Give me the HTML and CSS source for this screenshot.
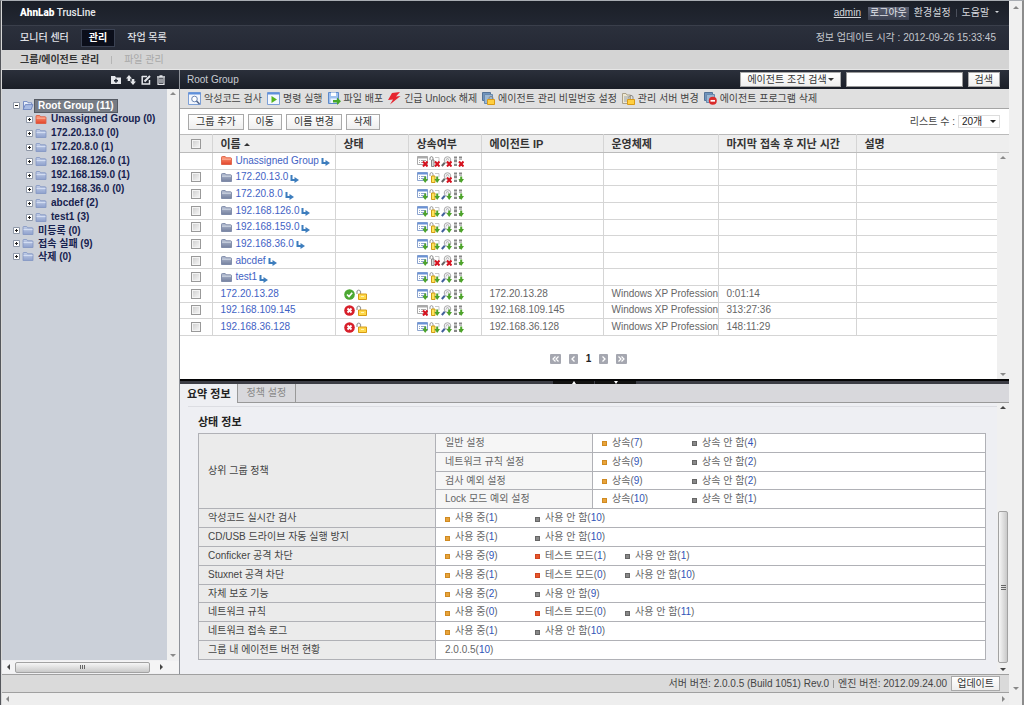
FILE: index.html
```html
<!DOCTYPE html>
<html lang="ko">
<head>
<meta charset="utf-8">
<title>AhnLab TrusLine</title>
<link rel="stylesheet" href="styles.css">
</head>
<body>
<svg class="defs" aria-hidden="true">
  <defs>
    <linearGradient id="gBlue" x1="0" y1="0" x2="0" y2="1"><stop offset="0" stop-color="#c3cfe8"/><stop offset="1" stop-color="#8fa1cd"/></linearGradient>
    <linearGradient id="gSlate" x1="0" y1="0" x2="0" y2="1"><stop offset="0" stop-color="#b4bdd2"/><stop offset="1" stop-color="#75819f"/></linearGradient>
    <linearGradient id="gRed" x1="0" y1="0" x2="0" y2="1"><stop offset="0" stop-color="#ff9a78"/><stop offset="1" stop-color="#e2452c"/></linearGradient>
  </defs>
  <symbol id="folder" viewBox="0 0 12 10"><path d="M.5 9.5V1.5Q.5.5 1.500.5H4.500L5.500 2H10.500Q11.500 2 11.500 3V9.500Z" fill="url(#gBlue)" stroke="#8597c4"/><path d="M1 4H11" stroke="#dbe4f6"/></symbol>
  <symbol id="folder-slate" viewBox="0 0 12 10"><path d="M.5 9.5V1.5Q.5.5 1.5.5H4.5L5.5 2H10.5Q11.5 2 11.5 3V9.5Z" fill="url(#gSlate)" stroke="#7783a3"/><path d="M1 3.500H11" stroke="#dfe4ee"/></symbol>
  <symbol id="folder-red" viewBox="0 0 12 10"><path d="M.5 9.5V1.5Q.5.5 1.5.5H4.5L5.5 2H10.5Q11.5 2 11.5 3V9.5Z" fill="url(#gRed)" stroke="#dc5a40"/><path d="M1 3.500H11" stroke="#ffc3ac"/></symbol>
  <symbol id="folder-open" viewBox="0 0 12 10"><path d="M1 9.500V.5H5L6 2H10V4" fill="#e6edfa" stroke="#6d85bf"/><path d="M.6 9.500 3 4H11.500L9.500 9.500Z" fill="#a9bce4" stroke="#6d85bf"/></symbol>
  <symbol id="minus" viewBox="0 0 7 7"><path d="M.5.5H6.500V6.500H.5Z" fill="#fff" stroke="#8f98a8"/><path d="M2 3.500H5" stroke="#222"/></symbol>
  <symbol id="plus" viewBox="0 0 7 7"><path d="M.5.5H6.500V6.500H.5Z" fill="#fff" stroke="#8f98a8"/><path d="M2 3.500H5M3.500 2V5" stroke="#222"/></symbol>
  <symbol id="inherit" viewBox="0 0 9 8"><path d="M1.500 0V5H5" fill="none" stroke="#3c7dbd" stroke-width="2"/><path d="M4.500 2 9 5 4.500 8Z" fill="#3c7dbd"/></symbol>
  <symbol id="x" viewBox="0 0 11 11"><path d="M6 5.500 10.500 10.500M10.500 5.500 6 10.500" stroke="#d6121f" stroke-width="2"/></symbol>
  <symbol id="dn" viewBox="0 0 11 11"><path d="M7.200 4.500H9.200V7H11L8.200 11 5.400 7H7.200Z" fill="#4da32a"/></symbol>
  <symbol id="list" viewBox="0 0 11 11"><path d="M.5.5H10.500V8.500H.5Z" fill="#fff" stroke="#8ba3ce"/><path d="M.5 1.500H10.500" stroke="#6a92d5" stroke-width="2"/><path d="M2 4.500H3M4 4.500H9M2 6.500H3M4 6.500H8" stroke="#8fa6cb"/></symbol>
  <symbol id="list-off" viewBox="0 0 11 11"><path d="M.5.5H10.500V8.500H.5Z" fill="#fff" stroke="#aaa"/><path d="M.5 1.500H10.500" stroke="#aaa" stroke-width="2"/><path d="M2 4.500H3M4 4.500H9M2 6.500H3M4 6.500H8" stroke="#aaa"/></symbol>
  <symbol id="key" viewBox="0 0 11 11"><path d="M1 4V1.500Q2.500-.3 4 1.500V4" fill="none" stroke="#999"/><path d="M2.500 4H6V10.500H2.500Z" fill="#ffe55c" stroke="#cf9d16"/><path d="M6 1.500H10V5" fill="none" stroke="#c9c9c9"/></symbol>
  <symbol id="key-off" viewBox="0 0 11 11"><path d="M1 4V1.500Q2.500-.3 4 1.500V4" fill="none" stroke="#888"/><path d="M2.500 4H5V10.500H2.500Z" fill="#ddd" stroke="#888"/><path d="M6 1.500H10V5" fill="none" stroke="#c9c9c9"/></symbol>
  <symbol id="lens" viewBox="0 0 11 11"><circle cx="6.500" cy="4" r="3.300" fill="#f4f4f8" stroke="#aaa"/><path d="M5 4.500 6.500 2 8 4.500" fill="none" stroke="#bbb"/><path d="M3.800 6.800.8 10" stroke="#415f9b" stroke-width="2"/></symbol>
  <symbol id="lens-off" viewBox="0 0 11 11"><circle cx="6.500" cy="4" r="3.300" fill="#f4f4f4" stroke="#aaa"/><path d="M5 4.500 6.500 2 8 4.500" fill="none" stroke="#bbb"/><path d="M3.800 6.800.8 10" stroke="#666" stroke-width="2"/></symbol>
  <symbol id="net" viewBox="0 0 11 11"><path d="M1 1.500H4M6 1.500H9M1 5H4M1 9H4M6 9H9" stroke="#888" stroke-width="2"/><path d="M1 3.500H4M6 3.500H9M1 7H4" stroke="#bbb"/></symbol>
  <symbol id="list-x" viewBox="0 0 11 11"><use href="#list-off"/><use href="#x"/></symbol>
  <symbol id="list-d" viewBox="0 0 11 11"><use href="#list"/><use href="#dn"/></symbol>
  <symbol id="key-x" viewBox="0 0 11 11"><use href="#key-off"/><use href="#x"/></symbol>
  <symbol id="key-d" viewBox="0 0 11 11"><use href="#key"/><use href="#dn"/></symbol>
  <symbol id="lens-x" viewBox="0 0 11 11"><use href="#lens-off"/><use href="#x"/></symbol>
  <symbol id="lens-d" viewBox="0 0 11 11"><use href="#lens"/><use href="#dn"/></symbol>
  <symbol id="net-x" viewBox="0 0 11 11"><use href="#net"/><use href="#x"/></symbol>
  <symbol id="net-d" viewBox="0 0 11 11"><use href="#net"/><use href="#dn"/></symbol>
  <symbol id="ok" viewBox="0 0 11 11"><circle cx="5.500" cy="5.500" r="5.300" fill="#4ca832"/><path d="M3 5.500 5 7.500 8.200 3.800" fill="none" stroke="#fff" stroke-width="1.700"/></symbol>
  <symbol id="bad" viewBox="0 0 11 11"><circle cx="5.500" cy="5.500" r="5.300" fill="#d71f2a"/><path d="M3.500 3.500 7.500 7.500M7.500 3.500 3.500 7.500" stroke="#fff" stroke-width="1.900"/></symbol>
  <symbol id="unlock" viewBox="0 0 11 11"><path d="M1 5V2.500Q2.700-.5 4.500 2.500V5" fill="none" stroke="#999" stroke-width="1.200"/><path d="M2.500 5H10.500V10.500H2.500Z" fill="#ffd94a" stroke="#d79c14"/><path d="M5 7.500H8" stroke="#fff3b5"/></symbol>
  <symbol id="t-scan" viewBox="0 0 13 13"><path d="M.5.5H12.500V12.500H.5Z" fill="#f2f6fd" stroke="#7c9fd6"/><path d="M.5 1.500H12.500" stroke="#5d8fdb" stroke-width="2"/><circle cx="6.500" cy="7" r="2.800" fill="#fff" stroke="#6d87b4"/><path d="M8.500 9 11.500 12" stroke="#54678c" stroke-width="1.600"/></symbol>
  <symbol id="t-run" viewBox="0 0 13 13"><path d="M.5.5H12.500V12.500H.5Z" fill="#f2f8ff" stroke="#7c9fd6"/><path d="M.5 1.500H12.500" stroke="#5d8fdb" stroke-width="2"/><path d="M4.500 4 10 7.500 4.500 11Z" fill="#55b51f"/></symbol>
  <symbol id="t-dist" viewBox="0 0 13 13"><path d="M.5.5H10.500V11.500H.5Z" fill="#9fc1ef" stroke="#5e8aca"/><path d="M3 .5H8V4H3Z" fill="#fff"/><path d="M2.500 6.500H8.500V11H2.500Z" fill="#eef5ff"/><path d="M5 8H9V5.500L13 9.200 9 13V10.500H5Z" fill="#46a829"/></symbol>
  <symbol id="t-bolt" viewBox="0 0 13 13"><path d="M4 1 12 0 8 4.500 12.500 4 2 12.500 5 7.500 0 8Z" fill="#e6252f"/></symbol>
  <symbol id="t-pass" viewBox="0 0 13 13"><path d="M.5.5H8.500V8.500H.5Z" fill="#6f93bd" stroke="#537296"/><path d="M2.500 2.500H10.500V11.500H2.500Z" fill="#9ab6d2" stroke="#688aae"/><path d="M7 7V5.500Q9 3 11 5.500V7" fill="none" stroke="#888"/><path d="M5.500 7.500H12.500V12.500H5.500Z" fill="#ffcf40" stroke="#d99a17"/></symbol>
  <symbol id="t-server" viewBox="0 0 13 13"><path d="M.5 1.500H4L5 3H8.500V11.500H.5Z" fill="#eee8d2" stroke="#aaa18a"/><path d="M2 5H7M2 7H6M2 9H5" stroke="#9aa2ad"/><path d="M7 7V4.500Q9 2 11 4.500V7" fill="none" stroke="#888"/><path d="M5.500 7.500H12.500V12.500H5.500Z" fill="#ffcf40" stroke="#d99a17"/></symbol>
  <symbol id="t-del" viewBox="0 0 13 13"><path d="M.5.5H8.500V8.500H.5Z" fill="#6f93bd" stroke="#537296"/><path d="M2.500 2.500H10.500V10.500H2.500Z" fill="#9ab6d2" stroke="#688aae"/><circle cx="8.800" cy="8.800" r="4" fill="#d92b2b"/><path d="M6.500 8.800H11" stroke="#fff" stroke-width="1.700"/></symbol>
  <symbol id="h-add" viewBox="0 0 10 10"><path d="M0 1H4L5 2.500H10V9H0Z" fill="#e4e6ea"/><path d="M5 3.800V7.800M3 5.800H7" stroke="#222835" stroke-width="1.400"/></symbol>
  <symbol id="h-move" viewBox="0 0 10 10"><path d="M3 0 6 3.500H4.300V6H1.700V3.500H0ZM7 10 4 6.500H5.700V4H8.300V6.500H10Z" fill="#e4e6ea"/></symbol>
  <symbol id="h-edit" viewBox="0 0 10 10"><path d="M1 1.500H6M1.200 1V9H8.500V5" fill="none" stroke="#e4e6ea" stroke-width="1.500"/><path d="M3.500 6.500 9 1" stroke="#e4e6ea" stroke-width="2"/></symbol>
  <symbol id="h-trash" viewBox="0 0 10 10"><path d="M1 2H9M3.500 1H6.500" stroke="#e4e6ea" stroke-width="1.300"/><path d="M2 3V9.300H8V3M4 3.500V8M6 3.500V8" fill="none" stroke="#e4e6ea" stroke-width="1.200"/></symbol>
  <symbol id="first" viewBox="0 0 11 10"><path d="M5.500 2.500 3 5 5.500 7.500M8.500 2.500 6 5 8.500 7.500" fill="none" stroke="#fff" stroke-width="1.200"/></symbol>
  <symbol id="prev" viewBox="0 0 9 10"><path d="M5.500 2.500 3 5 5.500 7.500" fill="none" stroke="#fff" stroke-width="1.300"/></symbol>
  <symbol id="next" viewBox="0 0 9 10"><path d="M3.500 2.500 6 5 3.500 7.500" fill="none" stroke="#fff" stroke-width="1.300"/></symbol>
  <symbol id="last" viewBox="0 0 11 10"><path d="M2.500 2.500 5 5 2.500 7.500M5.500 2.500 8 5 5.500 7.500" fill="none" stroke="#fff" stroke-width="1.200"/></symbol>
</svg>

<div class="window">
  <div class="app">
    <header class="top">
      <div class="brand"><b>AhnLab</b> TrusLine</div>
      <div class="account">
        <a class="user" href="#">admin</a>
        <button class="logout" type="button">로그아웃</button>
        <a href="#">환경설정</a><span class="bar"></span>
        <a href="#">도움말 <i class="tri down"></i></a>
      </div>
    </header>
    <nav class="nav">
      <a href="#">모니터 센터</a>
      <a class="current" href="#">관리</a>
      <a href="#">작업 목록</a>
      <span class="updated">정보 업데이트 시각 : 2012-09-26 15:33:45</span>
    </nav>
    <nav class="subnav">
      <a class="current" href="#">그룹/에이전트 관리</a><span class="bar"></span><a href="#">파일 관리</a>
    </nav>

    <div class="body">
      <aside class="side">
        <div class="side-head">
          <button type="button" aria-label="그룹 추가"><svg><use href="#h-add"/></svg></button>
          <button type="button" aria-label="이동"><svg><use href="#h-move"/></svg></button>
          <button type="button" aria-label="이름 변경"><svg><use href="#h-edit"/></svg></button>
          <button type="button" aria-label="삭제"><svg><use href="#h-trash"/></svg></button>
        </div>
        <div class="side-body">
          <ul class="tree">
            <li><svg class="tg"><use href="#minus"/></svg><svg class="fd"><use href="#folder-open"/></svg><a class="selected" href="#">Root Group (11)</a>
              <ul>
                <li><svg class="tg"><use href="#plus"/></svg><svg class="fd"><use href="#folder-red"/></svg><a href="#">Unassigned Group (0)</a></li>
                <li><svg class="tg"><use href="#plus"/></svg><svg class="fd"><use href="#folder"/></svg><a href="#">172.20.13.0 (0)</a></li>
                <li><svg class="tg"><use href="#plus"/></svg><svg class="fd"><use href="#folder"/></svg><a href="#">172.20.8.0 (1)</a></li>
                <li><svg class="tg"><use href="#plus"/></svg><svg class="fd"><use href="#folder"/></svg><a href="#">192.168.126.0 (1)</a></li>
                <li><svg class="tg"><use href="#plus"/></svg><svg class="fd"><use href="#folder"/></svg><a href="#">192.168.159.0 (1)</a></li>
                <li><svg class="tg"><use href="#plus"/></svg><svg class="fd"><use href="#folder"/></svg><a href="#">192.168.36.0 (0)</a></li>
                <li><svg class="tg"><use href="#plus"/></svg><svg class="fd"><use href="#folder"/></svg><a href="#">abcdef (2)</a></li>
                <li><svg class="tg"><use href="#plus"/></svg><svg class="fd"><use href="#folder"/></svg><a href="#">test1 (3)</a></li>
              </ul>
            </li>
            <li><svg class="tg"><use href="#plus"/></svg><svg class="fd"><use href="#folder"/></svg><a href="#">미등록 (0)</a></li>
            <li><svg class="tg"><use href="#plus"/></svg><svg class="fd"><use href="#folder"/></svg><a href="#">접속 실패 (9)</a></li>
            <li><svg class="tg"><use href="#plus"/></svg><svg class="fd"><use href="#folder"/></svg><a href="#">삭제 (0)</a></li>
          </ul>
          <div class="vscroll"><i class="tri up"></i><i class="tri down"></i></div>
        </div>
        <div class="hscroll"><i class="tri left"></i><div class="thumb"><i></i><i></i><i></i></div><i class="tri right"></i></div>
      </aside>

      <main class="main">
        <div class="main-head">
          <h1>Root Group</h1>
          <form class="search">
            <button class="btn" type="button">에이전트 조건 검색<i class="tri down"></i></button>
            <input type="text" aria-label="검색어">
            <button class="btn" type="button">검색</button>
          </form>
        </div>
        <div class="toolbar">
          <button type="button"><svg><use href="#t-scan"/></svg>악성코드 검사</button>
          <button type="button"><svg><use href="#t-run"/></svg>명령 실행</button>
          <button type="button"><svg><use href="#t-dist"/></svg>파일 배포</button>
          <button type="button"><svg><use href="#t-bolt"/></svg>긴급 Unlock 해제</button>
          <button type="button"><svg><use href="#t-pass"/></svg>에이전트 관리 비밀번호 설정</button>
          <button type="button"><svg><use href="#t-server"/></svg>관리 서버 변경</button>
          <button type="button"><svg><use href="#t-del"/></svg>에이전트 프로그램 삭제</button>
        </div>
        <div class="actions">
          <button class="btn" type="button">그룹 추가</button>
          <button class="btn" type="button">이동</button>
          <button class="btn" type="button">이름 변경</button>
          <button class="btn" type="button">삭제</button>
          <label class="count">리스트 수 :
            <span class="select"><select><option>20개</option></select><i class="tri down"></i></span>
          </label>
        </div>

        <section class="list">
          <div class="list-main">
            <table class="grid">
              <colgroup><col class="c-check"><col class="c-name"><col class="c-state"><col class="c-inherit"><col class="c-ip"><col class="c-os"><col class="c-time"><col></colgroup>
              <thead>
                <tr><th><input type="checkbox" aria-label="전체 선택"></th><th>이름 <i class="tri up"></i></th><th>상태</th><th>상속여부</th><th>에이전트 IP</th><th>운영체제</th><th>마지막 접속 후 지난 시간</th><th>설명</th></tr>
              </thead>
              <tbody>
                <tr><td></td><td><a href="#"><svg class="fd"><use href="#folder-red"/></svg>Unassigned Group<svg class="in"><use href="#inherit"/></svg></a></td><td></td><td class="ic"><svg><use href="#list-x"/></svg><svg><use href="#key-x"/></svg><svg><use href="#lens-x"/></svg><svg><use href="#net-x"/></svg></td><td></td><td></td><td></td><td></td></tr>
                <tr><td><input type="checkbox" aria-label="172.20.13.0"></td><td><a href="#"><svg class="fd"><use href="#folder-slate"/></svg>172.20.13.0<svg class="in"><use href="#inherit"/></svg></a></td><td></td><td class="ic"><svg><use href="#list-d"/></svg><svg><use href="#key-d"/></svg><svg><use href="#lens-x"/></svg><svg><use href="#net-d"/></svg></td><td></td><td></td><td></td><td></td></tr>
                <tr><td><input type="checkbox" aria-label="172.20.8.0"></td><td><a href="#"><svg class="fd"><use href="#folder-slate"/></svg>172.20.8.0<svg class="in"><use href="#inherit"/></svg></a></td><td></td><td class="ic"><svg><use href="#list-d"/></svg><svg><use href="#key-d"/></svg><svg><use href="#lens-d"/></svg><svg><use href="#net-d"/></svg></td><td></td><td></td><td></td><td></td></tr>
                <tr><td><input type="checkbox" aria-label="192.168.126.0"></td><td><a href="#"><svg class="fd"><use href="#folder-slate"/></svg>192.168.126.0<svg class="in"><use href="#inherit"/></svg></a></td><td></td><td class="ic"><svg><use href="#list-d"/></svg><svg><use href="#key-d"/></svg><svg><use href="#lens-d"/></svg><svg><use href="#net-d"/></svg></td><td></td><td></td><td></td><td></td></tr>
                <tr><td><input type="checkbox" aria-label="192.168.159.0"></td><td><a href="#"><svg class="fd"><use href="#folder-slate"/></svg>192.168.159.0<svg class="in"><use href="#inherit"/></svg></a></td><td></td><td class="ic"><svg><use href="#list-d"/></svg><svg><use href="#key-d"/></svg><svg><use href="#lens-d"/></svg><svg><use href="#net-d"/></svg></td><td></td><td></td><td></td><td></td></tr>
                <tr><td><input type="checkbox" aria-label="192.168.36.0"></td><td><a href="#"><svg class="fd"><use href="#folder-slate"/></svg>192.168.36.0<svg class="in"><use href="#inherit"/></svg></a></td><td></td><td class="ic"><svg><use href="#list-d"/></svg><svg><use href="#key-d"/></svg><svg><use href="#lens-d"/></svg><svg><use href="#net-d"/></svg></td><td></td><td></td><td></td><td></td></tr>
                <tr><td><input type="checkbox" aria-label="abcdef"></td><td><a href="#"><svg class="fd"><use href="#folder-slate"/></svg>abcdef<svg class="in"><use href="#inherit"/></svg></a></td><td></td><td class="ic"><svg><use href="#list-d"/></svg><svg><use href="#key-x"/></svg><svg><use href="#lens-x"/></svg><svg><use href="#net-d"/></svg></td><td></td><td></td><td></td><td></td></tr>
                <tr><td><input type="checkbox" aria-label="test1"></td><td><a href="#"><svg class="fd"><use href="#folder-slate"/></svg>test1<svg class="in"><use href="#inherit"/></svg></a></td><td></td><td class="ic"><svg><use href="#list-d"/></svg><svg><use href="#key-d"/></svg><svg><use href="#lens-d"/></svg><svg><use href="#net-d"/></svg></td><td></td><td></td><td></td><td></td></tr>
                <tr><td><input type="checkbox" aria-label="172.20.13.28"></td><td><a href="#">172.20.13.28</a></td><td class="ic"><svg><use href="#ok"/></svg><svg><use href="#unlock"/></svg></td><td class="ic"><svg><use href="#list-d"/></svg><svg><use href="#key-d"/></svg><svg><use href="#lens-d"/></svg><svg><use href="#net-d"/></svg></td><td>172.20.13.28</td><td>Windows XP Profession</td><td>0:01:14</td><td></td></tr>
                <tr><td><input type="checkbox" aria-label="192.168.109.145"></td><td><a href="#">192.168.109.145</a></td><td class="ic"><svg><use href="#bad"/></svg><svg><use href="#unlock"/></svg></td><td class="ic"><svg><use href="#list-x"/></svg><svg><use href="#key-d"/></svg><svg><use href="#lens-d"/></svg><svg><use href="#net-d"/></svg></td><td>192.168.109.145</td><td>Windows XP Profession</td><td>313:27:36</td><td></td></tr>
                <tr><td><input type="checkbox" aria-label="192.168.36.128"></td><td><a href="#">192.168.36.128</a></td><td class="ic"><svg><use href="#bad"/></svg><svg><use href="#unlock"/></svg></td><td class="ic"><svg><use href="#list-d"/></svg><svg><use href="#key-d"/></svg><svg><use href="#lens-d"/></svg><svg><use href="#net-d"/></svg></td><td>192.168.36.128</td><td>Windows XP Profession</td><td>148:11:29</td><td></td></tr>
              </tbody>
            </table>
            <div class="pager">
              <button type="button" aria-label="처음"><svg class="wide"><use href="#first"/></svg></button>
              <button type="button" aria-label="이전"><svg><use href="#prev"/></svg></button>
              <b>1</b>
              <button type="button" aria-label="다음"><svg><use href="#next"/></svg></button>
              <button type="button" aria-label="마지막"><svg class="wide"><use href="#last"/></svg></button>
            </div>
          </div>
          <div class="list-side"><div class="cap"></div><div class="vscroll"><i class="tri up"></i><i class="tri down"></i></div></div>
        </section>

        <div class="splitter"><span><i class="tri up"></i></span><span><i class="tri down"></i></span></div>

        <div class="tabs"><button class="current" type="button">요약 정보</button><button type="button">정책 설정</button></div>
        <section class="detail">
          <div class="detail-main">
            <h2>상태 정보</h2>
            <table class="info">
              <colgroup><col class="d-label"><col class="d-sub"><col></colgroup>
              <tbody>
                <tr><th rowspan="4">상위 그룹 정책</th><th class="sub">일반 설정</th><td><div><span class="on">상속(<a href="#">7</a>)</span><span class="off">상속 안 함(<a href="#">4</a>)</span></div></td></tr>
                <tr><th class="sub">네트워크 규칙 설정</th><td><div><span class="on">상속(<a href="#">9</a>)</span><span class="off">상속 안 함(<a href="#">2</a>)</span></div></td></tr>
                <tr><th class="sub">검사 예외 설정</th><td><div><span class="on">상속(<a href="#">9</a>)</span><span class="off">상속 안 함(<a href="#">2</a>)</span></div></td></tr>
                <tr><th class="sub">Lock 모드 예외 설정</th><td><div><span class="on">상속(<a href="#">10</a>)</span><span class="off">상속 안 함(<a href="#">1</a>)</span></div></td></tr>
                <tr><th>악성코드 실시간 검사</th><td colspan="2"><div><span class="on">사용 중(<a href="#">1</a>)</span><span class="off">사용 안 함(<a href="#">10</a>)</span></div></td></tr>
                <tr><th>CD/USB 드라이브 자동 실행 방지</th><td colspan="2"><div><span class="on">사용 중(<a href="#">1</a>)</span><span class="off">사용 안 함(<a href="#">10</a>)</span></div></td></tr>
                <tr><th>Conficker 공격 차단</th><td colspan="2"><div><span class="on">사용 중(<a href="#">9</a>)</span><span class="test">테스트 모드(<a href="#">1</a>)</span><span class="off">사용 안 함(<a href="#">1</a>)</span></div></td></tr>
                <tr><th>Stuxnet 공격 차단</th><td colspan="2"><div><span class="on">사용 중(<a href="#">1</a>)</span><span class="test">테스트 모드(<a href="#">0</a>)</span><span class="off">사용 안 함(<a href="#">10</a>)</span></div></td></tr>
                <tr><th>자체 보호 기능</th><td colspan="2"><div><span class="on">사용 중(<a href="#">2</a>)</span><span class="off">사용 안 함(<a href="#">9</a>)</span></div></td></tr>
                <tr><th>네트워크 규칙</th><td colspan="2"><div><span class="on">사용 중(<a href="#">0</a>)</span><span class="test">테스트 모드(<a href="#">0</a>)</span><span class="off">사용 안 함(<a href="#">11</a>)</span></div></td></tr>
                <tr><th>네트워크 접속 로그</th><td colspan="2"><div><span class="on">사용 중(<a href="#">1</a>)</span><span class="off">사용 안 함(<a href="#">10</a>)</span></div></td></tr>
                <tr><th>그룹 내 에이전트 버전 현황</th><td colspan="2">2.0.0.5(<a href="#">10</a>)</td></tr>
              </tbody>
            </table>
          </div>
          <div class="vscroll strong"><i class="tri up"></i><div class="thumb"><i></i><i></i><i></i></div><i class="tri down"></i></div>
        </section>
      </main>
    </div>

    <footer class="foot">
      <span>서버 버전: 2.0.0.5 (Build 1051) Rev.0</span><span class="bar"></span><span>엔진 버전: 2012.09.24.00</span>
      <button class="btn" type="button">업데이트</button>
    </footer>
    <div class="page-h"><i class="tri left"></i><i class="tri right"></i></div>
  </div>
  <div class="page-v"><i class="tri up"></i><i class="tri down"></i></div>
</div>
</body>
</html>
```

FILE: styles.css
```css
* { box-sizing: border-box; }

body {
  margin: 0;
  font: 10px/14px "Liberation Sans", "Noto Sans CJK KR", sans-serif;
  color: #444;
  background: #f1f1f1;
}

a { color: inherit; text-decoration: none; }
button, input, select { font: inherit; color: inherit; margin: 0; }
button { border: 0; padding: 0; background: none; white-space: nowrap; }
svg { display: block; flex: none; }
.defs { position: absolute; width: 0; height: 0; }

.window {
  display: flex;
  min-height: 100vh;
  border-top: 1px solid #a9adb3;
  border-left: 1px solid #55575c;
  border-right: 2px solid #8c8c8c;
}
.app { flex: 1; min-width: 0; display: flex; flex-direction: column; border-left: 1px solid #d8d8d8; }

.tri { display: inline-block; flex: none; width: 0; height: 0; border: 3px solid transparent; }
.tri.down { border-top-color: currentColor; border-bottom-width: 0; }
.tri.up { border-bottom-color: currentColor; border-top-width: 0; }
.tri.left { border-right-color: currentColor; border-left-width: 0; }
.tri.right { border-left-color: currentColor; border-right-width: 0; }
.bar { width: 1px; height: 8px; background: #999; }

/* Header */
.top {
  display: flex; align-items: center; justify-content: space-between;
  height: 25px; padding: 0 10px 0 18px;
  color: #d4d7dc; background: linear-gradient(#1b1f28, #222732);
  border-bottom: 1px solid #3a3f4b;
}
.brand { font: 500 10px/14px Roboto, sans-serif; color: #e8eaed; }
.brand b { font-weight: 900; color: #fff; }
.account { display: flex; align-items: center; gap: 5px; }
.account .user { text-decoration: underline; margin-right: 2px; }
.account .bar { background: #4a4f5b; }
.account .tri { border-width: 2px 2px 0; margin: 0 0 3px 3px; }
.logout { height: 13px; padding: 0 2px; line-height: 12px; color: #e2e4ea; background: linear-gradient(#5b6072, #3b4050); }

.nav {
  display: flex; align-items: center; gap: 12px;
  height: 24px; padding: 0 13px 0 18px;
  font-weight: 500; color: #e0e2e7;
  background: linear-gradient(#2b303c, #252935);
}
.nav .current { padding: 0 7px; line-height: 16px; font-weight: 700; color: #fff; background: #0b0e1a; border: 1px solid #3a4152; }
.updated { margin-left: auto; font-weight: 400; color: #c4c7cd; }

.subnav {
  display: flex; align-items: center; gap: 12px;
  height: 20px; padding-left: 18px;
  color: #a8a8a8; background: #d4d4d4; border-bottom: 1px solid #e6e6e6;
}
.subnav .current { font-weight: 700; color: #333; }
.subnav .bar { background: #b5b5b5; }

/* Left panel */
.body { flex: 1; display: flex; min-height: 0; }
.side { flex: none; width: 178px; display: flex; flex-direction: column; border-right: 1px solid #8e9299; background: #f0f0f2; }
.side-head {
  display: flex; justify-content: flex-end; align-items: center; gap: 5px;
  height: 19px; padding-right: 13px;
  background: linear-gradient(#2b303b, #1a1e27);
}
.side-head svg { width: 10px; height: 10px; }
.side-body { flex: 1; display: flex; }

.tree, .tree ul { list-style: none; margin: 0; padding: 0; }
.tree { flex: 1; padding: 10px 0 0 10px; background: #cbd0d9; font-weight: 700; color: #17224f; white-space: nowrap; }
.tree ul { flex: 0 0 100%; padding-left: 13px; }
.tree li { display: flex; flex-wrap: wrap; align-items: center; }
.tree a { height: 12px; padding: 0 3px; margin: 1px 0 0 1px; line-height: 12px; }
.tree ul a { margin-bottom: 1px; }
.tree .selected { color: #fff; background: #767b84; outline: 1px solid #555a63; }
.tree .fd { width: 12px; }
.tg { width: 7px; height: 7px; margin: 0 2px 0 1px; }
.fd { width: 11px; height: 9px; }

.vscroll {
  display: flex; flex-direction: column; align-items: center; justify-content: space-between;
  width: 12px; padding: 3px 0; background: #f0f0f0; color: #8a8a8a;
}
.vscroll.strong { color: #444; }
.thumb { display: flex; align-items: center; justify-content: center; border: 1px solid #a2a2a2; border-radius: 2px; }
.thumb i { background: #666; }
.hscroll { display: flex; align-items: center; height: 12px; padding: 0 16px 0 5px; color: #444; background: #f4f4f5; margin: 1px 0; }
.hscroll .thumb { flex: 1; height: 11px; gap: 1px; margin: 0 10px 0 5px; background: linear-gradient(#f6f6f6, #c9c9c9); }
.hscroll .thumb i { width: 1px; height: 4px; }

/* Main area */
.main { flex: 1; min-width: 0; display: flex; flex-direction: column; background: #fff; }
.main-head {
  display: flex; align-items: center; justify-content: space-between;
  height: 19px; padding: 0 9px 0 7px;
  background: linear-gradient(#2b303b, #1a1e27);
}
h1 { margin: 0; font-size: 10px; font-weight: 400; color: #c9ccd2; }
.search { display: flex; gap: 5px; }
.search input { width: 117px; height: 15px; padding: 0 3px; border: 1px solid #999; background: #fff; }
.btn { height: 16px; padding: 0 7px; line-height: 14px; color: #333; border: 1px solid #a9a9a9; background: linear-gradient(#fff, #eee); }
.search .btn { height: 15px; padding: 0 6px; line-height: 13px; }
.search .tri { margin: 0 0 2px 1px; }

.toolbar { display: flex; align-items: center; gap: 5px; height: 20px; padding-left: 8px; background: #e0e0e0; border-bottom: 1px solid #a5a5a5; }
.toolbar button { display: flex; align-items: center; gap: 3px; }
.toolbar svg { width: 13px; height: 13px; }

.actions { display: flex; align-items: center; gap: 4px; height: 25px; padding: 0 9px 0 8px; }
.count { display: flex; align-items: center; gap: 3px; margin-left: auto; }
.select { position: relative; display: block; color: #222; }
.select select { appearance: none; display: block; width: 42px; height: 13px; padding: 0 3px; line-height: 11px; border: 1px solid #ddd; border-radius: 0; background: #fff; }
.select .tri { position: absolute; right: 4px; top: 5px; }

.list { display: flex; height: 245px; }
.list-main { flex: 1; min-width: 0; }
.grid { width: 100%; height: 202px; table-layout: fixed; border-collapse: collapse; color: #666; }
.c-check { width: 32px; }
.c-name { width: 123px; }
.c-state, .c-inherit { width: 73px; }
.c-ip { width: 122px; }
.c-os { width: 115px; }
.c-time { width: 138px; }
.grid th, .grid td { padding: 0 0 0 8px; border: 1px solid #d5d5d5; line-height: 14px; text-align: left; white-space: nowrap; }
.grid tr > :first-child { border-left: 0; padding: 0; text-align: center; }
.grid tr > :last-child { border-right: 0; }
.grid th { height: 18px; font-size: 11px; font-weight: 700; color: #333; background: #eee; border-top-color: #bbb; border-bottom-color: #bbb; }
.grid th .tri { margin-bottom: 2px; }
.grid a { display: flex; align-items: center; color: #3f62c4; }
.grid a .fd { margin-right: 4px; }
.in { width: 9px; height: 8px; margin: 3px 0 0 2px; }
.ic svg { display: inline-block; width: 11px; height: 11px; vertical-align: middle; margin-right: 1px; }
input[type="checkbox"] { appearance: none; display: block; width: 10px; height: 10px; margin: 0 auto; border: 1px solid #999; background: linear-gradient(135deg, #ccc, #f8f8f8); box-shadow: inset 0 0 0 1px #f4f4f4; }
.list-side { display: flex; flex-direction: column; }
.cap { height: 19px; background: #eee; border: solid #bbb; border-width: 1px 0; }
.list-side .vscroll { flex: 1; }

.pager { display: flex; justify-content: center; align-items: center; gap: 8px; padding-top: 16px; color: #222; }
.pager button { background: #a5a7b0; border-radius: 1px; }
.pager svg { width: 9px; height: 10px; }
.pager .wide { width: 11px; }

.splitter { display: flex; justify-content: center; gap: 1px; height: 5px; background: #3c3d45; border-top: 2px solid #050506; }
.splitter span { display: flex; justify-content: center; width: 41px; background: #111; color: #fff; }
.splitter .tri { border-left-width: 2px; border-right-width: 2px; }

.tabs { display: flex; height: 19px; background: #d8d8dc; }
.tabs button { padding: 0 9px; color: #888; border: solid #999; border-width: 0 1px 1px 0; }
.tabs .current { padding: 0 6px 0 7px; font-size: 11px; font-weight: 700; color: #222; background: #eeeff3; border-bottom: 0; }
.tabs::after { content: ""; flex: 1; border-bottom: 1px solid #999; }

.detail { flex: 1; display: flex; background: #eeeff3; }
.detail-main { flex: 1; margin: 3px 0 0 8px; padding: 0 11px 14px 10px; border-top: 1px solid #dcdde2; }
h2 { margin: 7px 0 3px; font-size: 11px; line-height: 16px; font-weight: 700; color: #222; }
.info { width: 100%; height: 227px; table-layout: fixed; border-collapse: collapse; background: #fff; }
.d-label { width: 237px; }
.d-sub { width: 157px; }
.info th, .info td { padding: 0 9px; line-height: 14px; text-align: left; font-weight: 400; border: 1px solid #b0b1b6; }
.info th { background: #ebebeb; }
.info .sub { background: #f6f6f6; color: #666; }
.info td { color: #666; }
.info td a { color: #2f55b8; }
.info div { display: flex; }
.info span { display: flex; align-items: center; width: 90px; }
.info span::before { content: ""; width: 3px; height: 3px; margin: 2px 5px 0 0; background: #888; border: 1px solid #666; }
.info .on::before { background: #e8a33a; border-color: #cf8a22; }
.info .test::before { background: #e8562a; border-color: #cf4420; }
.detail .vscroll .thumb { flex-direction: column; gap: 1px; width: 10px; height: 152px; margin: auto 0 5px; background: linear-gradient(90deg, #f6f6f6, #c9c9c9); }
.detail .vscroll .thumb i { width: 5px; height: 1px; }

/* Footer and outer scroll bars */
.foot { display: flex; align-items: center; justify-content: flex-end; gap: 4px; height: 19px; padding-right: 9px; background: #dadada; border: solid #a0a0a0; border-width: 1px 0; }
.foot .btn { height: 15px; padding: 0 5px; line-height: 13px; }
.page-h { display: flex; align-items: center; justify-content: space-between; height: 12px; padding: 0 4px; color: #888; background: #eee; }
.page-v { display: flex; flex-direction: column; align-items: center; justify-content: space-between; width: 13px; padding: 5px 0 15px; color: #888; background: #f0f0f0; }
```
